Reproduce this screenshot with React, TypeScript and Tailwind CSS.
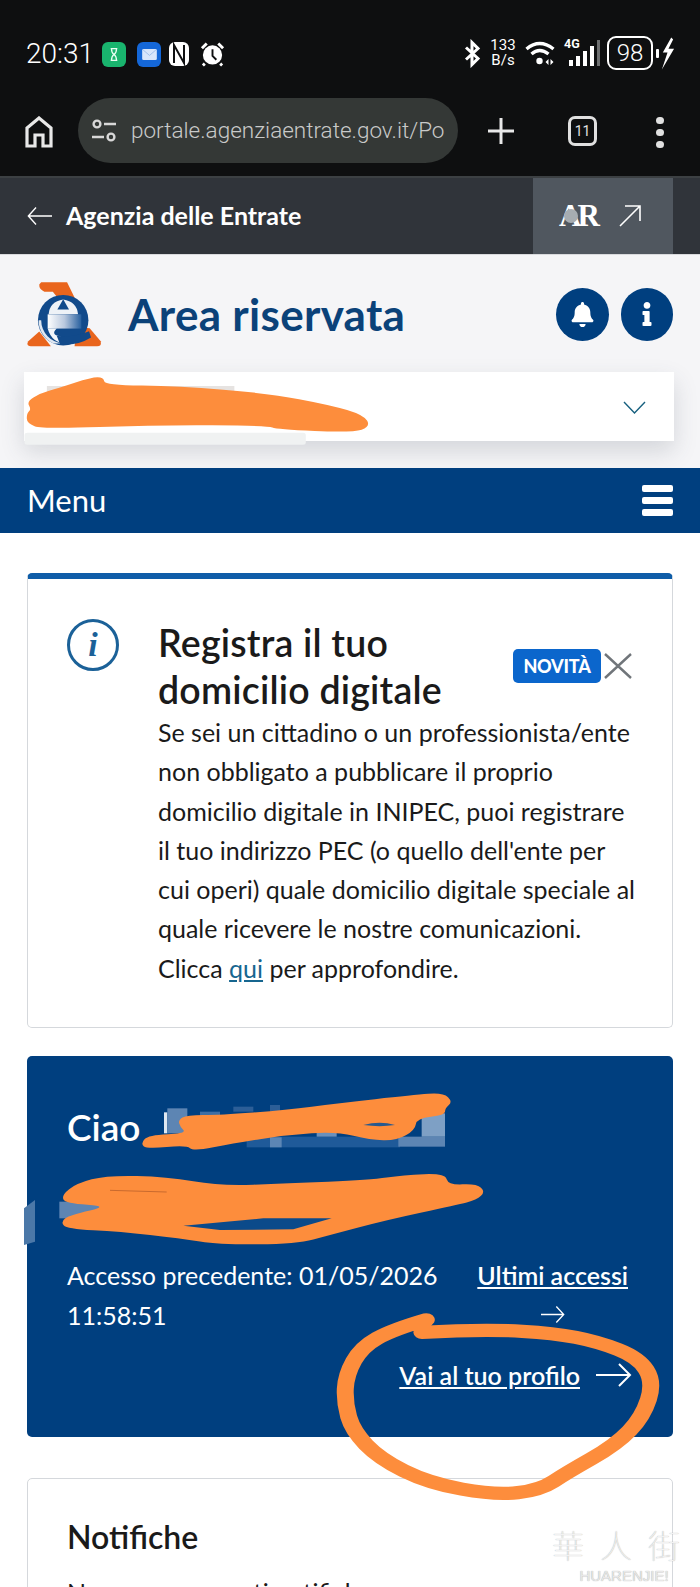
import React from "react";
import { FaBell, FaInfo } from "react-icons/fa";

// linea morbida che passa per i punti medi, per le cancellature a mano
const smooth = (pts: number[][], closed: boolean): string => {
    const mid = (a: number[], b: number[]) => `${(a[0] + b[0]) / 2} ${(a[1] + b[1]) / 2}`;
    if (closed) {
        let d = `M${mid(pts[pts.length - 1], pts[0])}`;
        pts.forEach((p, i) => {
            d += ` Q${p[0]} ${p[1]} ${mid(p, pts[(i + 1) % pts.length])}`;
        });
        return d + "Z";
    }
    let d = `M${pts[0][0]} ${pts[0][1]}`;
    for (let i = 1; i < pts.length - 1; i++) {
        d += ` Q${pts[i][0]} ${pts[i][1]} ${mid(pts[i], pts[i + 1])}`;
    }
    const last = pts[pts.length - 1];
    return d + ` L${last[0]} ${last[1]}`;
};

const scribbleTop = [
    [60, 425], [90, 400], [130, 385], [205, 352], [232, 352], [235, 375], [400, 378], [600, 400], [740, 435], [815, 465],
    [830, 500], [790, 518], [620, 508], [600, 497], [350, 495], [95, 507], [60, 490], [60, 460], [70, 448],
];
const scribbleName = [
    [475, 120], [500, 105], [600, 105], [800, 90], [950, 70], [1180, 45], [1270, 38], [1298, 65], [1275, 85], [1275, 105],
    [1190, 115], [1185, 150], [1130, 182], [1050, 180], [950, 155], [800, 165], [640, 190], [520, 214], [500, 195], [380, 207],
    [362, 190], [385, 165], [500, 160], [480, 140],
];
const scribbleCode = [
    [125, 345], [170, 310], [260, 286], [440, 290], [600, 318], [800, 310], [1050, 300], [1150, 285], [1275, 280], [1285, 315],
    [1370, 311], [1396, 335], [1370, 360], [1310, 375], [1100, 420], [930, 465], [830, 492], [600, 494], [480, 475], [300, 455],
    [140, 447], [122, 425], [150, 405], [270, 378], [135, 370],
];
const ring = [
    [955, 802], [880, 830], [810, 880], [775, 960], [772, 1040], [790, 1120], [850, 1200], [960, 1270], [1110, 1305], [1210, 1290],
    [1270, 1240], [1380, 1160], [1440, 1080], [1465, 980], [1430, 910], [1340, 865], [1240, 840], [1100, 830], [945, 838],
];

// freccia sottile, la punta va a destra
const ArrowLine = ({ className }: { className: string }) => (
    <svg viewBox="0 0 36 26" preserveAspectRatio="none" className={className} fill="none" stroke="currentColor" strokeWidth="2">
        <path d="M0 13 H34 M23 2 L34 13 L23 24" />
    </svg>
);

// logo Agenzia delle Entrate
const Logo = () => (
    <svg viewBox="45 30 235 205" className="w-[76px] h-[67px] shrink-0">
        <defs>
            <linearGradient id="eg" x1="0" x2="1" y1="0" y2="0">
                <stop offset="0" stopColor="#ffffff" />
                <stop offset="0.5" stopColor="#b9c8de" />
                <stop offset="1" stopColor="#27609f" />
            </linearGradient>
        </defs>
        <path d="M92 33 H172 L200 90 H150 L128 62 H102 Q85 55 86 40Z" fill="#e9651d" />
        <path d="M205 170 L242 175 L276 215 Q279 231 265 231 H195Z" fill="#e9651d" />
        <path d="M86 185 L122 231 H60 Q44 229 52 215Z" fill="#e9651d" />
        <circle cx="160" cy="150" r="78" fill="#114a8b" />
        <path d="M84 150 A78 78 0 0 0 130 222 L160 222 A72 72 0 0 1 92 150Z" fill="#dfe7f1" />
        <path d="M115 132 Q118 92 160 86 Q202 92 206 132Z" fill="#eef2f7" />
        <path d="M160 85 L178 117 L142 117Z" fill="#114a8b" />
        <rect x="112" y="132" width="104" height="44" fill="url(#eg)" />
        <path d="M112 176 H140 Q120 195 150 200 L170 222 Q125 222 112 176Z" fill="#f3f6fa" />
        <path d="M140 198 Q190 205 240 184 L246 204 Q200 232 150 224Z" fill="#114a8b" />
    </svg>
);

const StatusIcons = () => (
    <div className="flex items-center text-white">
        <svg viewBox="0 0 18 28" className="w-[18px] h-[29px]" fill="none" stroke="#fff" strokeWidth="3">
            <path d="M2 8 L14 19 L8 25 L8 3 L14 9 L2 20" />
        </svg>
        <div className="ml-[7px] w-[28px] text-[15px] leading-[15px] font-['Roboto',sans-serif] text-center">
            133
            <br />
            B/s
        </div>
        <svg viewBox="0 0 32 26" className="w-[33px] h-[26px] ml-[7px]" fill="none" stroke="#fff" strokeWidth="3.4">
            <path d="M2 9 Q15 -2 29 9" />
            <path d="M7 14 Q15 7 24 14" />
            <circle cx="15" cy="21" r="3.2" fill="#fff" stroke="none" />
            <path d="M21 22 L24 19 V25Z M26 19 L29 22 L26 25Z" fill="#fff" stroke="none" />
        </svg>
        <div className="relative ml-[7px] w-[35px] h-[30px]">
            <span className="absolute left-0 top-[-1px] text-[12.5px] font-bold font-['Roboto',sans-serif] leading-[14px]">
                4G
            </span>
            <div className="absolute left-[5px] bottom-[2px] flex items-end gap-[3px]">
                <div className="w-[4px] h-[6px] bg-white" />
                <div className="w-[4px] h-[10px] bg-white" />
                <div className="w-[4px] h-[15px] bg-white" />
                <div className="w-[4px] h-[20px] bg-white" />
                <div className="w-[3px] h-[26px] bg-[#6d6f70]" />
            </div>
        </div>
        <div className="ml-[8px] w-[46px] h-[34px] rounded-[9px] border-2 border-white flex items-center justify-center text-[24px] font-light font-['Roboto',sans-serif] leading-none">
            98
        </div>
        <div className="ml-[3px] w-[3px] h-[9px] bg-white rounded-[1px]" />
        <svg viewBox="0 0 16 34" className="w-[15px] h-[33px] ml-[1px]" fill="#fff">
            <path d="M12 0 L3 16 L8 16 L2 34 L15 12 L9 12 L14 2Z" />
        </svg>
    </div>
);

const App = (): JSX.Element => {
    const bodyLines = [
        "Se sei un cittadino o un professionista/ente",
        "non obbligato a pubblicare il proprio",
        "domicilio digitale in INIPEC, puoi registrare",
        "il tuo indirizzo PEC (o quello dell'ente per",
        "cui operi) quale domicilio digitale speciale al",
        "quale ricevere le nostre comunicazioni.",
    ];

    return (
        <div className="relative w-[700px] h-[1587px] overflow-hidden bg-white font-['Lato',sans-serif] text-[#1a1a1a]">
            {/* barra di stato */}
            <div className="h-[98px] bg-[#0e0f10] flex items-end pb-[28px] pl-[26px] pr-[25px] justify-between">
                <div className="flex items-center text-white">
                    <span className="text-[28px] font-light font-['Roboto',sans-serif] leading-[32px]">20:31</span>
                    <div className="ml-[8px] w-[24px] h-[25px] rounded-[6px] bg-[#19b46e] flex items-center justify-center">
                        <svg viewBox="0 0 12 16" className="w-[10px] h-[15px]" fill="none" stroke="#eafff4" strokeWidth="1.5">
                            <path d="M2 1 H10 M2 15 H10 M3 1 Q3 6 6 8 Q9 6 9 1 M3 15 Q3 10 6 8 Q9 10 9 15" />
                        </svg>
                    </div>
                    <div className="ml-[11px] w-[24px] h-[25px] rounded-[6px] bg-[#1467d8] flex items-center justify-center">
                        <svg viewBox="0 0 16 12" className="w-[15px] h-[11px]">
                            <rect width="16" height="12" rx="1.5" fill="#d8e6fb" />
                            <path d="M1 1 L8 7 L15 1" fill="none" stroke="#9dbdea" strokeWidth="1" />
                        </svg>
                    </div>
                    <svg viewBox="0 0 22 26" className="ml-[7px] w-[22px] h-[26px]" fill="none">
                        <rect x="1" y="1" width="20" height="24" rx="6" fill="#fff" />
                        <path d="M6 22 V4 L16 22 V4" stroke="#0e0f10" strokeWidth="2" />
                    </svg>
                    <svg viewBox="0 0 26 26" className="ml-[10px] w-[25px] h-[26px]" fill="none">
                        <circle cx="13" cy="14" r="10" fill="#fff" />
                        <path d="M13 8 V15 L17 19" stroke="#0e0f10" strokeWidth="2" />
                        <path d="M2 7 L7 2 M24 7 L19 2 M5 23 L3 25 M21 23 L23 25" stroke="#fff" strokeWidth="3" />
                    </svg>
                </div>
                <StatusIcons />
            </div>

            {/* barra del browser */}
            <div className="h-[80px] bg-[#0e0f10] border-b-2 border-[#3c4043] flex items-start pl-[25px]">
                <svg viewBox="0 0 28 32" className="w-[28px] h-[32px] mt-[18px]" fill="none" stroke="#e8e8e8" strokeWidth="3.2">
                    <path d="M2 30 V12 L14 2 L26 12 V30 H18 V19 H10 V30 Z" />
                </svg>
                <div className="ml-[25px] w-[380px] h-[65px] rounded-full bg-[#343836] flex items-center pl-[13px]">
                    <svg viewBox="0 0 26 26" className="w-[26px] h-[26px]" fill="none" stroke="#d8d8d8" strokeWidth="2.4">
                        <circle cx="6" cy="6" r="3.4" />
                        <path d="M13 6 H25 M1 19 H13" />
                        <circle cx="20" cy="19" r="3.4" />
                    </svg>
                    <span className="ml-[14px] text-[22.5px] leading-none font-['Roboto',sans-serif] font-light text-[#c9cac9] whitespace-nowrap">
                        portale.agenziaentrate.gov.it/Po
                    </span>
                </div>
                <svg viewBox="0 0 26 26" className="ml-[30px] mt-[20px] w-[26px] h-[26px]" stroke="#e8e8e8" strokeWidth="3">
                    <path d="M13 0 V26 M0 13 H26" />
                </svg>
                <div className="ml-[54px] mt-[18px] w-[29px] h-[30px] rounded-[7px] border-[3px] border-[#e0e0e0] text-[#e0e0e0] flex items-center justify-center text-[14px] font-['Roboto',sans-serif]">
                    11
                </div>
                <div className="ml-[59px] mt-[19px] flex flex-col gap-[5px]">
                    <div className="w-[8px] h-[7px] rounded-full bg-[#e0e0e0]" />
                    <div className="w-[8px] h-[7px] rounded-full bg-[#e0e0e0]" />
                    <div className="w-[8px] h-[7px] rounded-full bg-[#e0e0e0]" />
                </div>
            </div>

            {/* Agenzia delle Entrate */}
            <div className="h-[77px] bg-[#30343a] flex items-center pl-[27px] border-b border-[#d9dadd]">
                <ArrowLine className="w-[25px] h-[20px] text-white rotate-180" />
                <span className="ml-[14px] text-[25px] font-bold text-white">Agenzia delle Entrate</span>
                <div className="ml-auto mr-[27px] w-[140px] h-full bg-[#50575f] flex items-center pl-[26px]">
                    <div className="relative">
                        <span className="text-[31px] leading-none font-bold font-['Liberation_Serif',serif] text-white tracking-[-4px]">
                            AR
                        </span>
                        <div className="absolute left-[5px] top-[9px] w-[14px] h-[14px] rounded-full bg-[#a7adb2]" />
                    </div>
                    <svg viewBox="0 0 22 22" className="ml-[23px] w-[22px] h-[22px]" fill="none" stroke="#fff" strokeWidth="1.6">
                        <path d="M1 21 L21 1 M6 1 H21 V16" />
                    </svg>
                </div>
            </div>

            {/* intestazione */}
            <div className="h-[213px] bg-[#f5f5f7] pt-[25px]">
                <div className="flex items-center h-[68px] pl-[26px] pr-[27px]">
                    <Logo />
                    <h1 className="ml-[26px] text-[44px] font-bold leading-[68px] text-[#0b4279] tracking-[0.3px]">
                        Area riservata
                    </h1>
                    <div className="ml-auto flex gap-[12px]">
                        <div className="w-[53px] h-[53px] rounded-full bg-[#003f7f] flex items-center justify-center text-white">
                            <FaBell className="w-[25px] h-[25px]" />
                        </div>
                        <div className="w-[52px] h-[53px] rounded-full bg-[#003f7f] flex items-center justify-center text-white">
                            <FaInfo className="w-[22px] h-[24px]" />
                        </div>
                    </div>
                </div>
                <div className="ml-[24px] mt-[24px] w-[650px] h-[69px] bg-white shadow-[0_10px_22px_rgba(60,70,90,0.18)] flex items-center justify-end pr-[28px]">
                    <svg viewBox="0 0 23 13" className="w-[23px] h-[13px] mt-[2px]" fill="none" stroke="#17607f" strokeWidth="1.4">
                        <path d="M1 1 L11.5 12 L22 1" />
                    </svg>
                </div>
            </div>

            {/* menu */}
            <div className="h-[65px] bg-[#003f7f] flex items-center justify-between pl-[27px] pr-[27px]">
                <span className="text-[31px] text-white">Menu</span>
                <div className="flex flex-col gap-[5px]">
                    <div className="w-[31px] h-[7px] rounded-[2px] bg-white" />
                    <div className="w-[31px] h-[7px] rounded-[2px] bg-white" />
                    <div className="w-[31px] h-[7px] rounded-[2px] bg-white" />
                </div>
            </div>

            <div className="px-[27px] pt-[40px] flex flex-col">
                {/* domicilio digitale */}
                <div className="h-[455px] rounded-[5px] border border-[#d5d8dc] border-t-[6px] border-t-[#0f5da8] flex pl-[39px]">
                    <div className="mt-[40px] w-[52px] h-[52px] rounded-full border-[3px] border-[#1b6198] flex items-center justify-center text-[#1b6198]">
                        <span className="text-[34px] italic font-bold font-['Liberation_Serif',serif] leading-none">i</span>
                    </div>
                    <div className="ml-[39px] flex-1 pt-[40px]">
                        <div className="flex">
                            <h2 className="text-[37.5px] leading-[47px] font-semibold w-[355px] whitespace-nowrap tracking-[0.2px]">
                                Registra il tuo
                                <br />
                                domicilio digitale
                            </h2>
                            <div className="flex items-center h-[36px] mt-[29px]">
                                <div className="w-[88px] h-[34px] rounded-[5px] bg-[#0b66cc] text-white text-[18px] font-black flex items-center justify-center tracking-[-0.2px]">
                                    NOVITÀ
                                </div>
                                <svg viewBox="0 0 28 26" className="ml-[3px] w-[28px] h-[26px]" fill="none" stroke="#70757a" strokeWidth="2.4">
                                    <path d="M1 1 L27 25 M27 1 L1 25" />
                                </svg>
                            </div>
                        </div>
                        <div className="text-[25px] leading-[39.3px] whitespace-nowrap">
                            {bodyLines.map((line, idx) => (
                                <div key={idx}>{line}</div>
                            ))}
                            <div>
                                Clicca <span className="text-[#17668f] underline">qui</span> per approfondire.
                            </div>
                        </div>
                    </div>
                </div>

                {/* ciao */}
                <div className="mt-[28px] h-[381px] rounded-[5px] bg-[#003f7f] text-white pl-[40px] pr-[45px] pt-[48px] flex flex-col">
                    <div className="text-[37px] font-semibold leading-[46px]">Ciao</div>
                    <div className="mt-[105px] flex justify-between">
                        <div className="text-[25px] leading-[40px] whitespace-nowrap">
                            Accesso precedente: 01/05/2026
                            <br />
                            11:58:51
                        </div>
                        <div className="flex flex-col items-center">
                            <span className="text-[25px] leading-[40px] font-semibold underline whitespace-nowrap">Ultimi accessi</span>
                            <ArrowLine className="w-[24px] h-[19px] mt-[10px]" />
                        </div>
                    </div>
                    <div className="mt-[20px] mr-[-4px] flex items-center justify-end">
                        <span className="text-[25px] leading-[40px] font-semibold underline">Vai al tuo profilo</span>
                        <ArrowLine className="ml-[16px] w-[36px] h-[26px]" />
                    </div>
                </div>

                {/* notifiche */}
                <div className="mt-[41px] h-[200px] rounded-[5px] border border-[#d5d8dc] pl-[39px] pt-[36px]">
                    <div className="text-[32px] font-semibold leading-[44px]">Notifiche</div>
                    <div className="mt-[13px] text-[25px] leading-[40px]">Non sono presenti notifiche</div>
                </div>
            </div>

            {/* cancellature a mano sopra lo screenshot */}
            <svg
                viewBox="0 0 1568 870"
                preserveAspectRatio="none"
                className="absolute left-0 top-[260px] w-[700px] h-[290px]"
            >
                <rect x="55" y="518" width="630" height="36" rx="6" fill="#f0f2f2" />
                <rect x="105" y="378" width="420" height="20" fill="#e6e3e1" />
                <path d={smooth(scribbleTop, true)} fill="#fd8d3c" />
            </svg>
            <svg viewBox="0 0 1440 510" className="absolute left-[20px] top-[1080px] w-[480px] h-[170px]">
                <path d="M12 385 L45 360 V485 L12 495Z" fill="#4b78a8" />
                <rect x="118" y="365" width="160" height="50" fill="#5d85b3" />
                <rect x="432" y="97" width="10" height="63" fill="#dfe8f1" />
                <rect x="442" y="85" width="60" height="75" fill="#5d85b3" />
                <rect x="540" y="95" width="60" height="15" fill="#3e6ea3" />
                <rect x="640" y="80" width="60" height="15" fill="#2c5e97" />
                <rect x="750" y="75" width="30" height="20" fill="#2c5e97" />
                <rect x="680" y="170" width="460" height="32" fill="#1f5a99" />
                <rect x="750" y="172" width="35" height="30" fill="#5c86b5" />
                <rect x="890" y="152" width="60" height="18" fill="#6a90bb" />
                <rect x="1135" y="170" width="140" height="30" fill="#5d85b3" />
                <rect x="1205" y="100" width="70" height="70" fill="#7ea0c5" />
                <path d={smooth(scribbleName, true)} fill="#fd8d3c" />
                <path d="M1030 135 Q1080 122 1125 135 Q1080 142 1030 135Z" fill="#26598f" />
                <path d={smooth(scribbleCode, true)} fill="#fd8d3c" />
                <path d="M490 437 L730 415 L935 415 L820 448 L600 450Z" fill="#0b4a8a" />
                <path d="M270 331 L440 336" stroke="#c96a2e" strokeWidth="3" />
            </svg>
            <svg
                viewBox="0 0 1568 1568"
                preserveAspectRatio="none"
                className="absolute left-0 top-[1040px] w-[700px] h-[547px] pointer-events-none"
            >
                <path
                    d={smooth(ring, false)}
                    fill="none"
                    stroke="#fd8d3c"
                    strokeWidth="38"
                    strokeLinecap="round"
                    strokeLinejoin="round"
                />
            </svg>

            {/* watermark */}
            <div className="absolute left-[551px] top-[1528px] w-[146px] text-center pointer-events-none">
                <div className="text-[32px] leading-none tracking-[16px] font-['Noto_Sans_CJK_SC',sans-serif] font-thin text-[#f2f2f2] [text-shadow:0_0_1px_#999] whitespace-nowrap">
                    華人街
                </div>
                <div className="mt-[8px] text-[15px] leading-[15px] text-[#e8e8e8] [text-shadow:0_0_1px_#999] font-['Liberation_Sans',sans-serif]">
                    HUARENJIE!
                </div>
            </div>
        </div>
    );
};

export default App;
